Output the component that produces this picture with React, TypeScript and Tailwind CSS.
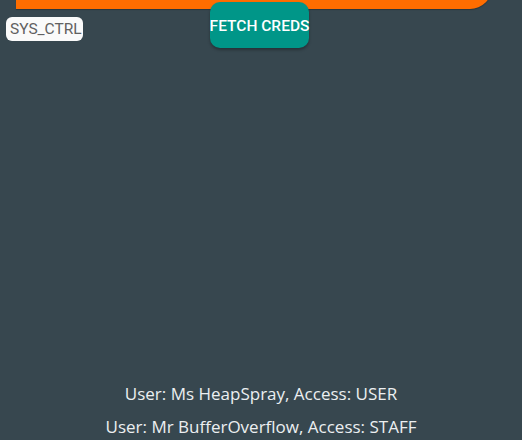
export default function App() {
  return (
    <div className="flex h-[440px] w-full flex-col overflow-hidden bg-[#37474f]">
      <div className="ml-[16px] -mt-[31px] h-[40px] w-[476px] shrink-0 rounded-br-[22px] bg-[#ff6d00] shadow-[0_1px_1px_rgba(0,0,0,0.25)]" />
      <div className="-mt-[7px] flex shrink-0 items-start">
        <div className="ml-[6px] mt-[15px] flex h-[24px] w-[77px] items-center rounded-[6px] bg-[#fafafa] pl-[4px] pt-[2px] font-['Roboto',sans-serif] text-[15.5px] text-[#616161]">
          SYS_CTRL
        </div>
        <button className="ml-[127px] flex h-[46px] w-[99px] items-center justify-center rounded-[10px] bg-[#009688] pt-[4px] font-['Roboto',sans-serif] text-[15.5px] font-medium whitespace-nowrap text-white shadow-[0_2px_3px_rgba(0,0,0,0.3)]">
          FETCH CREDS
        </button>
      </div>
      <div className="flex-1" />
      <div className="mb-[-3px] flex flex-col items-center font-['Open_Sans',sans-serif] text-[17px] text-[#eceff1]">
        <p className="leading-[33px]">User: Ms HeapSpray, Access: USER</p>
        <p className="leading-[33px]">User: Mr BufferOverflow, Access: STAFF</p>
      </div>
    </div>
  );
}
